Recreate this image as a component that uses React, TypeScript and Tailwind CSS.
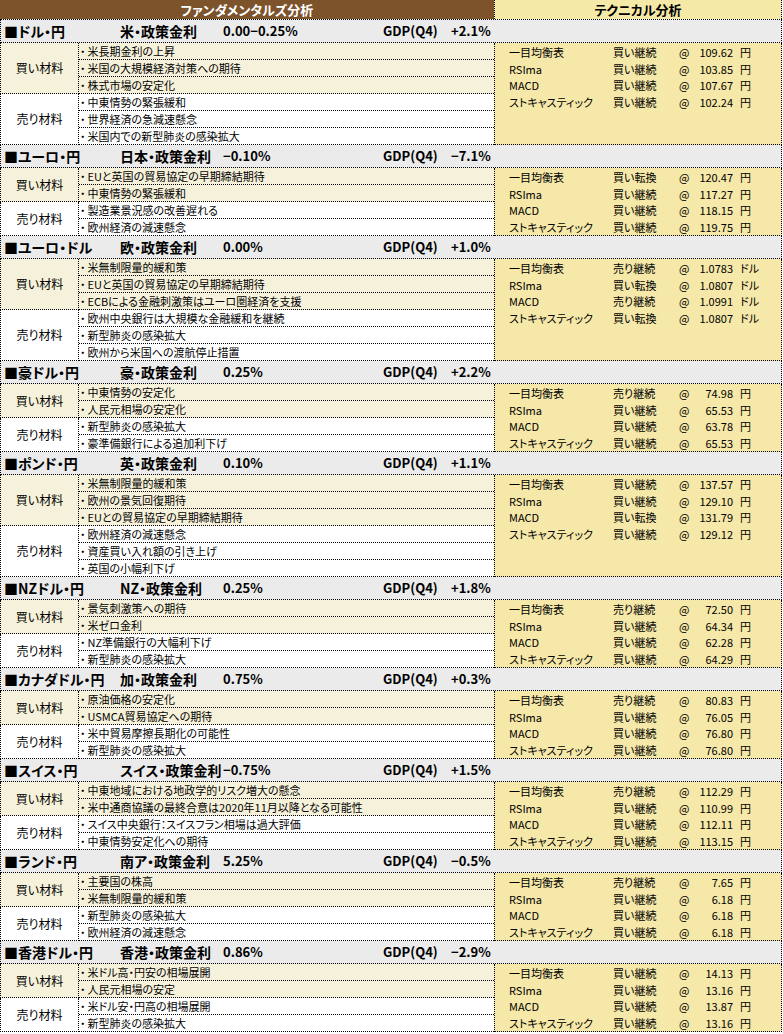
import React from 'react';

type Tech = { name: string; signal: string; price: string };

interface Pair {
  pair: string;
  policy: string;
  rate: string;
  gdp: string;
  buy: string[];
  sell: string[];
  unit: string;
  tech: Tech[];
}

const techNames = ['一目均衡表', 'RSIma', 'MACD', 'ストキャスティック'];

const mk = (signals: string[], prices: string[]): Tech[] =>
  techNames.map((name, i) => ({ name, signal: signals[i], price: prices[i] }));

const pairs: Pair[] = [
  {
    pair: '■ドル・円',
    policy: '米・政策金利',
    rate: '0.00−0.25%',
    gdp: '+2.1%',
    buy: ['米長期金利の上昇', '米国の大規模経済対策への期待', '株式市場の安定化'],
    sell: ['中東情勢の緊張緩和', '世界経済の急減速懸念', '米国内での新型肺炎の感染拡大'],
    unit: '円',
    tech: mk(['買い継続', '買い継続', '買い継続', '買い継続'], ['109.62', '103.85', '107.67', '102.24']),
  },
  {
    pair: '■ユーロ・円',
    policy: '日本・政策金利',
    rate: '−0.10%',
    gdp: '−7.1%',
    buy: ['EUと英国の貿易協定の早期締結期待', '中東情勢の緊張緩和'],
    sell: ['製造業景況感の改善遅れる', '欧州経済の減速懸念'],
    unit: '円',
    tech: mk(['買い転換', '買い継続', '買い継続', '買い継続'], ['120.47', '117.27', '118.15', '119.75']),
  },
  {
    pair: '■ユーロ・ドル',
    policy: '欧・政策金利',
    rate: '0.00%',
    gdp: '+1.0%',
    buy: ['米無制限量的緩和策', 'EUと英国の貿易協定の早期締結期待', 'ECBによる金融刺激策はユーロ圏経済を支援'],
    sell: ['欧州中央銀行は大規模な金融緩和を継続', '新型肺炎の感染拡大', '欧州から米国への渡航停止措置'],
    unit: 'ドル',
    tech: mk(['売り継続', '買い転換', '売り継続', '買い転換'], ['1.0783', '1.0807', '1.0991', '1.0807']),
  },
  {
    pair: '■豪ドル・円',
    policy: '豪・政策金利',
    rate: '0.25%',
    gdp: '+2.2%',
    buy: ['中東情勢の安定化', '人民元相場の安定化'],
    sell: ['新型肺炎の感染拡大', '豪準備銀行による追加利下げ'],
    unit: '円',
    tech: mk(['売り継続', '買い継続', '買い継続', '買い継続'], ['74.98', '65.53', '63.78', '65.53']),
  },
  {
    pair: '■ポンド・円',
    policy: '英・政策金利',
    rate: '0.10%',
    gdp: '+1.1%',
    buy: ['米無制限量的緩和策', '欧州の景気回復期待', 'EUとの貿易協定の早期締結期待'],
    sell: ['欧州経済の減速懸念', '資産買い入れ額の引き上げ', '英国の小幅利下げ'],
    unit: '円',
    tech: mk(['買い継続', '買い継続', '買い転換', '買い継続'], ['137.57', '129.10', '131.79', '129.12']),
  },
  {
    pair: '■NZドル・円',
    policy: 'NZ・政策金利',
    rate: '0.25%',
    gdp: '+1.8%',
    buy: ['景気刺激策への期待', '米ゼロ金利'],
    sell: ['NZ準備銀行の大幅利下げ', '新型肺炎の感染拡大'],
    unit: '円',
    tech: mk(['売り継続', '買い継続', '買い継続', '買い継続'], ['72.50', '64.34', '62.28', '64.29']),
  },
  {
    pair: '■カナダドル・円',
    policy: '加・政策金利',
    rate: '0.75%',
    gdp: '+0.3%',
    buy: ['原油価格の安定化', 'USMCA貿易協定への期待'],
    sell: ['米中貿易摩擦長期化の可能性', '新型肺炎の感染拡大'],
    unit: '円',
    tech: mk(['売り継続', '買い継続', '買い継続', '買い継続'], ['80.83', '76.05', '76.80', '76.80']),
  },
  {
    pair: '■スイス・円',
    policy: 'スイス・政策金利',
    rate: '−0.75%',
    gdp: '+1.5%',
    buy: ['中東地域における地政学的リスク増大の懸念', '米中通商協議の最終合意は2020年11月以降となる可能性'],
    sell: ['スイス中央銀行：スイスフラン相場は過大評価', '中東情勢安定化への期待'],
    unit: '円',
    tech: mk(['売り継続', '買い継続', '買い継続', '買い継続'], ['112.29', '110.99', '112.11', '113.15']),
  },
  {
    pair: '■ランド・円',
    policy: '南ア・政策金利',
    rate: '5.25%',
    gdp: '−0.5%',
    buy: ['主要国の株高', '米無制限量的緩和策'],
    sell: ['新型肺炎の感染拡大', '欧州経済の減速懸念'],
    unit: '円',
    tech: mk(['売り継続', '買い継続', '買い継続', '買い継続'], ['7.65', '6.18', '6.18', '6.18']),
  },
  {
    pair: '■香港ドル・円',
    policy: '香港・政策金利',
    rate: '0.86%',
    gdp: '−2.9%',
    buy: ['米ドル高・円安の相場展開', '人民元相場の安定'],
    sell: ['米ドル安・円高の相場展開', '新型肺炎の感染拡大'],
    unit: '円',
    tech: mk(['買い継続', '買い継続', '買い継続', '買い継続'], ['14.13', '13.16', '13.87', '13.16']),
  },
];

const Group = ({ label, items, bg }: { label: string; items: string[]; bg: string }) => (
  <div className={`flex ${bg}`}>
    <div className="flex w-[79px] shrink-0 items-center justify-center border-b border-l border-r border-dotted border-black text-[12px]">
      {label}
    </div>
    <div className="flex-1">
      {items.map((t) => (
        <div key={t} className="h-[17px] truncate border-b border-dotted border-black pl-[1px] text-[11px] leading-[16px]">
          <span className="mr-[2px]">・</span>
          {t}
        </div>
      ))}
    </div>
  </div>
);

const Section = ({ p }: { p: Pair }) => (
  <div>
    <div className="flex h-[23px] items-center border-b border-l border-r border-dotted border-black bg-[#ebebeb] font-bold">
      <span className="w-[119px] shrink-0 pl-[3px] text-[14px]">{p.pair}</span>
      <span className="w-[103px] shrink-0 text-[14px]">{p.policy}</span>
      <span className="w-[160px] shrink-0 text-[13px]">{p.rate}</span>
      <span className="w-[68px] shrink-0 text-[13px]">GDP(Q4)</span>
      <span className="text-[13px]">{p.gdp}</span>
    </div>
    <div className="flex">
      <div className="w-[494px] shrink-0">
        <Group label="買い材料" items={p.buy} bg="bg-[#f6f1da]" />
        <Group label="売り材料" items={p.sell} bg="bg-white" />
      </div>
      <div className="flex-1 border-b border-l border-r border-dotted border-black bg-[#f5e8a8] pl-[14px] pt-[1px] text-[11px]">
        {p.tech.map((t) => (
          <div key={t.name} className="flex h-[16.5px] items-center">
            <span className="w-[104px] shrink-0">{t.name}</span>
            <span className="w-[66px] shrink-0">{t.signal}</span>
            <span className="w-[20px] shrink-0">@</span>
            <span className="w-[34px] shrink-0 text-right">{t.price}</span>
            <span className="pl-[7px]">{p.unit}</span>
          </div>
        ))}
      </div>
    </div>
  </div>
);

export default function App() {
  return (
    <div className="min-h-screen bg-white font-['Noto_Sans_CJK_JP',sans-serif] text-black [font-feature-settings:'palt']">
      <div className="w-[782px]">
        <div className="flex h-[20px] border-b border-dotted border-black">
          <div className="flex w-[494px] shrink-0 items-center justify-center bg-[#7d532c] text-[13px] font-bold text-white">
            ファンダメンタルズ分析
          </div>
          <div className="flex flex-1 items-center justify-center border-l border-r border-dotted border-black bg-[#f5e9a8] text-[13px] font-bold">
            テクニカル分析
          </div>
        </div>
        {pairs.map((p) => (
          <Section key={p.pair} p={p} />
        ))}
      </div>
    </div>
  );
}
